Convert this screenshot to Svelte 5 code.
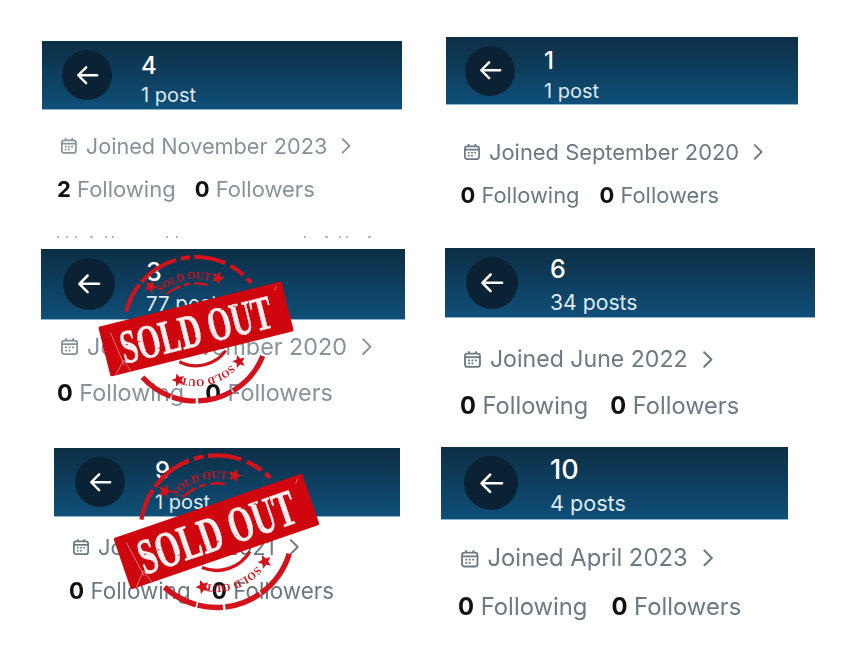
<script>
  const cards = [
    { l: 42, t: 41, w: 360, h: 69, cx: 45, r: 25, tx: 99, ts: 24, ss: 20, ho: 9, hg: 4, title: '4', sub: '1 post', il: 18, ity: 23, jfs: 21.7, sfs: 22, joined: 'Joined November 2023', rowgap: 17, nl: 15, sg: 19, following: 2, fade: true, soft: true },
    { l: 446, t: 37, w: 352, h: 68, cx: 44, r: 25, tx: 98, ts: 24, ss: 20, ho: 10, hg: 5, title: '1', sub: '1 post', il: 17, ity: 34, jfs: 21.9, sfs: 21.9, joined: 'Joined September 2020', rowgap: 17, nl: 14.5, sg: 20, following: 0 },
    { l: 41, t: 249, w: 364, h: 71, cx: 48, r: 26, tx: 105, ts: 25, ss: 20.5, ho: 7, hg: 6, title: '3', sub: '77 posts', il: 19, ity: 13, jfs: 23.3, sfs: 23.4, joined: 'Joined November 2020', rowgap: 18, nl: 16, sg: 21, following: 0, soft: true },
    { l: 445, t: 248, w: 370, h: 70, cx: 47, r: 26, tx: 105, ts: 25, ss: 21.2, ho: 6, hg: 7, title: '6', sub: '34 posts', il: 18, ity: 28, jfs: 23.1, sfs: 23.6, joined: 'Joined June 2022', rowgap: 18, nl: 15, sg: 22, following: 0 },
    { l: 54, t: 448, w: 346, h: 69, cx: 46, r: 25, tx: 101, ts: 24, ss: 20, ho: 7, hg: 6, title: '9', sub: '1 post', il: 18, ity: 17, jfs: 22, sfs: 22.4, joined: 'Joined May 2021', rowgap: 18, nl: 15, sg: 21, following: 0 },
    { l: 441, t: 447, w: 347, h: 73, cx: 50, r: 27, tx: 109, ts: 27, ss: 21.6, ho: 6, hg: 7, title: '10', sub: '4 posts', il: 19, ity: 24, jfs: 23.8, sfs: 23.8, joined: 'Joined April 2023', rowgap: 20, nl: 17, sg: 24, following: 0 }
  ];
  const stamps = [
    { id: 'a', x: 196, y: 329, size: 160, rot: -14 },
    { id: 'b', x: 216, y: 531, size: 169, rot: -19 }
  ];
  const stars = [
    { a: 37, r: 70, s: 0.9 },
    { a: -33, r: 78, s: 0.9 },
    { a: 141, r: 68, s: 0.9 },
    { a: 213, r: 68, s: 0.9 }
  ];
  const rings = [
    { r: 90, a: -62, b: 64, w: 5, dash: '38 4 52 6 12 5 40 7 20 6' },
    { r: 90, a: 126, b: 242, w: 6.5, dash: '58 2 44 3 30 2' },
    { r: 57, a: -26, b: 29, w: 3, dash: '20 4 8 5' },
    { r: 46, a: 140, b: 221, w: 4, dash: 'none' }
  ];
  function pt(r, a) {
    const t = (a * Math.PI) / 180;
    return `${(100 + r * Math.sin(t)).toFixed(2)} ${(100 - r * Math.cos(t)).toFixed(2)}`;
  }
  function arc(r, a, b) {
    return `M${pt(r, a)}A${r} ${r} 0 ${b - a > 180 ? 1 : 0} 1 ${pt(r, b)}`;
  }
</script>

<main class="canvas">
  {#each cards as c}
    <section class="card" class:soft={c.soft} style="left:{c.l}px;top:{c.t}px;width:{c.w}px">
      <header class="bar" style="height:{c.h}px;padding-left:{c.cx - c.r}px">
        <span class="back" style="width:{c.r * 2}px;height:{c.r * 2}px">
          <svg viewBox="0 0 24 24" width={c.r * 1.06} height={c.r * 1.06} fill="none" stroke="#fff" stroke-width="2.2" stroke-linecap="round" stroke-linejoin="round">
            <path d="M21 12H4M11 4.8 3.8 12l7.2 7.2" />
          </svg>
        </span>
        <div class="head" style="margin-left:{c.tx - c.cx - c.r}px;padding-top:{c.ho}px;gap:{c.hg}px">
          <div class="title" style="font-size:{c.ts}px;line-height:{c.ts + 2}px">{c.title}</div>
          <div class="sub" style="font-size:{c.ss}px;line-height:{c.ss + 4}px">{c.sub}</div>
        </div>
      </header>
      <div class="joined" style="margin-top:{c.ity}px;padding-left:{c.il}px;font-size:{c.jfs}px">
        <svg class="cal" viewBox="0 0 24 24" width={c.jfs * 0.82} height={c.jfs * 0.82} fill="none" stroke="currentColor" stroke-width="2.3">
          <rect x="2.5" y="4.5" width="19" height="17" rx="3" />
          <path d="M2.5 9h19M7.5 1.5v3.5M16.5 1.5v3.5" />
          <path d="M6.5 13h2.4M10.8 13h2.4M15.1 13h2.4M6.5 17h2.4M10.8 17h2.4" stroke-width="2.2" />
        </svg>
        <span>{c.joined}</span>
        <svg class="chev" viewBox="0 0 24 24" width={c.jfs} height={c.jfs} fill="none" stroke="currentColor" stroke-width="2.1" stroke-linecap="round" stroke-linejoin="round">
          <path d="M8.5 4.5 16 12l-7.500 7.500" />
        </svg>
      </div>
      <div class="stats" style="margin-top:{c.rowgap}px;padding-left:{c.nl}px;font-size:{c.sfs}px;gap:{c.sg}px">
        <span><b>{c.following}</b> Following</span>
        <span><b>0</b> Followers</span>
      </div>
      {#if c.fade}
        <svg class="specks" width="340" height="4" viewBox="0 0 340 4" aria-hidden="true">
          <path d="M15 2h2M24 2h2M33 2h2M48 2h3M63 2h2M70 2h2M124 2h2M134 2h2M262 2h2M283 2h3M297 2h2M304 2h2M326 2h3" stroke="#b4babe" stroke-width="2" />
        </svg>
      {/if}
    </section>
  {/each}

  {#each stamps as s}
    <svg class="stamp" style="left:{s.x - s.size / 2}px;top:{s.y - s.size / 2}px" width={s.size} height={s.size} viewBox="0 0 200 200">
      <defs>
        <path id="arc-top-{s.id}" d={arc(63, -60, 60)} />
        <path id="arc-bot-{s.id}" d={arc(63, 120, 240)} />
      </defs>
      <g transform="rotate({s.rot} 100 100)">
        <g fill="none" stroke="#d3121c">
          {#each rings as g}
            <path d={arc(g.r, g.a, g.b)} stroke-width={g.w} stroke-dasharray={g.dash} />
          {/each}
        </g>
        <text class="stamp-small"><textPath href="#arc-top-{s.id}" startOffset="50%" text-anchor="middle">SOLD OUT</textPath></text>
        <text class="stamp-small"><textPath href="#arc-bot-{s.id}" startOffset="50%" text-anchor="middle">SOLD OUT</textPath></text>
        <g fill="#d3121c">
          {#each stars as st}
            <path transform="rotate({st.a} 100 100) translate(100 {100 - st.r}) scale({st.s})" d="m0-9 2.6 6 6.4.6-4.8 4.3 1.4 6.4L0 5l-5.600 3.300 1.400-6.400L-9-2.400l6.400-.6z" />
          {/each}
        </g>
        <rect x="-18" y="68" width="236" height="64" rx="2" fill="#d0060f" />
        <text class="stamp-big" x="100" y="121" text-anchor="middle" textLength="194" lengthAdjust="spacingAndGlyphs">SOLD OUT</text>
        <path d="M16 112h166M10 98h32M120 84h44M40 124h50" fill="none" stroke="#d0060f" stroke-width="0.9" stroke-dasharray="3 5 1 7" />
        <path d="M-11 131l14-15 5 15M-5 78l7 44M211 72l-4 5" fill="none" stroke="#f2b4b4" stroke-width="0.7" />
      </g>
    </svg>
  {/each}
</main>

<style>
  :global(body) {
    margin: 0;
    background: #fff;
  }
  .canvas {
    position: relative;
    width: 846px;
    height: 668px;
    overflow: hidden;
    background: #fff;
    font-family: Inter, "Noto Sans", sans-serif;
    color: #6b7983;
  }
  .card {
    position: absolute;
    filter: blur(0.35px);
  }
  .card.soft {
    color: #87939b;
  }
  .bar {
    display: flex;
    align-items: center;
    box-sizing: border-box;
    background: linear-gradient(#0d2e45, #0f4f78);
    border-bottom: 1px solid #8fb4cd;
    color: #fff;
  }
  .back {
    display: flex;
    flex: none;
    align-items: center;
    justify-content: center;
    border-radius: 50%;
    background: #0a2233;
  }
  .head {
    display: flex;
    flex-direction: column;
    box-sizing: border-box;
  }
  .title {
    font-weight: 500;
  }
  .sub {
    color: #dfe9f0;
  }
  .joined {
    display: flex;
    align-items: center;
    gap: 8px;
    line-height: 1.2;
    white-space: nowrap;
  }
  .cal,
  .chev {
    flex: none;
  }
  .stats {
    display: flex;
    line-height: 1.2;
    white-space: nowrap;
  }
  .stats b {
    color: #111;
    font-weight: 700;
  }
  .specks {
    display: block;
    margin: 33px 0 0;
  }
  .stamp {
    position: absolute;
    overflow: visible;
    filter: blur(0.35px);
  }
  .stamp-big {
    fill: #fbeeee;
    stroke: #fbeeee;
    stroke-width: 0.6;
    font-family: "Liberation Serif", serif;
    font-weight: 700;
    font-size: 60px;
  }
  .stamp-small {
    fill: #d3121c;
    font-family: "Liberation Serif", serif;
    font-weight: 700;
    font-size: 13px;
  }
</style>
